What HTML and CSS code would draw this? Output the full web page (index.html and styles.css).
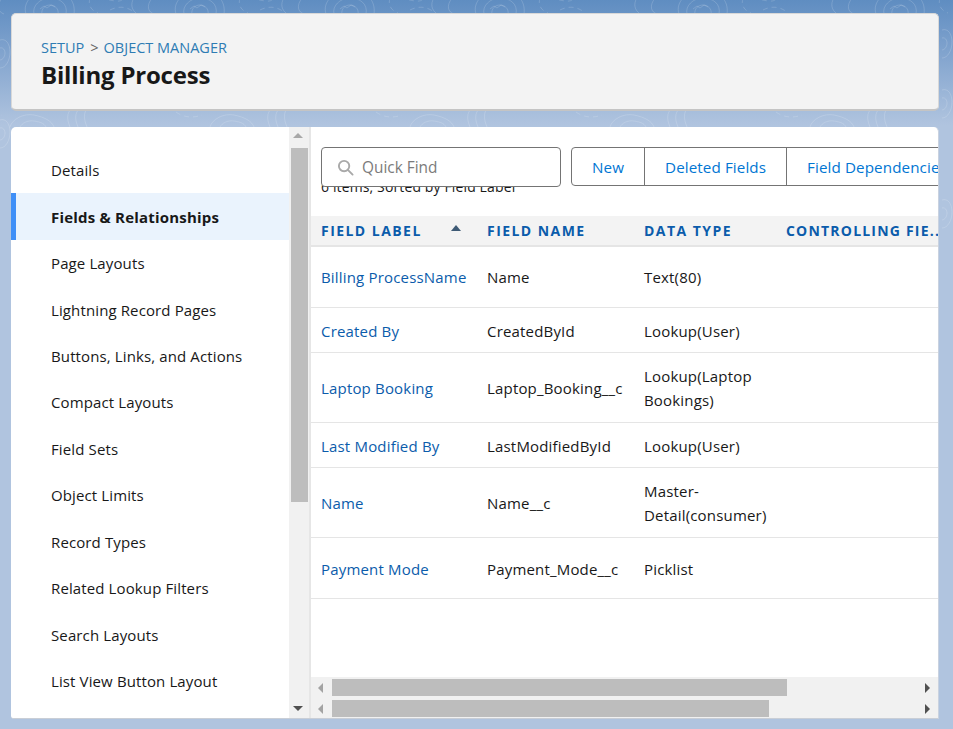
FILE: index.html
```html
<!DOCTYPE html>
<html lang="en">
<head>
  <meta charset="UTF-8">
  <meta name="viewport" content="width=device-width, initial-scale=1.0">
  <title>Billing Process | Object Manager</title>
  <link rel="stylesheet" href="styles.css">
</head>
<body>

<svg class="topo" width="953" height="729" viewBox="0 0 953 729" fill="none" stroke="#fff" stroke-opacity=".16">
  <defs>
    <g id="swirl">
      <path d="M-24 14c-4-12 8-24 24-24s26 10 24 24"/>
      <path d="M-16 14c-2-8 6-16 16-16s18 6 16 16"/>
      <path d="M-8 14c-1-5 3-9 8-9s9 4 8 9M-10 9l4-3 3 2 4-3 4 2"/>
      <path d="M40 -2c-2 6 0 12 8 15M50 -2c12 2 20 6 24 0M60 10c8-4 16-4 24 2" stroke-dasharray="5 4"/>
      <path d="M-48 -2c-6 8-4 14 2 16M-66 -2c-4 6-2 12 2 15"/>
    </g>
    <g id="arch">
      <path d="M-30 17c2-8 14-14 24-12s18 6 20 12"/>
      <path d="M-20 17c2-4 8-7 14-6s10 2 12 6"/>
      <path d="M30 0c-4 6-2 12 0 17M38 0c-4 6-2 12 0 17M46 0c-3 6-1 12 1 17"/>
      <path d="M-64 2c8 6 18 6 26 3" stroke-dasharray="5 4"/>
    </g>
    <path id="side" d="M0 0c6-2 10 4 10 12s-4 16-10 16M0 8c3-1 5 2 5 5s-2 7-5 7"/>
  </defs>
  <use href="#swirl" x="50" y="0"/>
  <use href="#swirl" x="200" y="0"/>
  <use href="#swirl" x="350" y="0"/>
  <use href="#swirl" x="500" y="0"/>
  <use href="#swirl" x="703" y="0"/>
  <use href="#swirl" x="900" y="0"/>
  <use href="#arch" x="40" y="110"/>
  <use href="#arch" x="240" y="110"/>
  <use href="#arch" x="440" y="110"/>
  <use href="#arch" x="640" y="110"/>
  <use href="#arch" x="840" y="110"/>
  <use href="#side" x="0" y="40"/>
  <use href="#side" x="0" y="120"/>
  <use href="#side" x="942" y="30"/>
  <use href="#side" x="942" y="90"/>
  <use href="#side" x="942" y="200"/>
</svg>

<header class="page-head">
  <div class="crumbs"><a>SETUP</a><span class="sep">&gt;</span><a>OBJECT MANAGER</a></div>
  <h1>Billing Process</h1>
</header>

<div class="panel">
  <nav class="side">
    <a>Details</a>
    <a class="active">Fields &amp; Relationships</a>
    <a>Page Layouts</a>
    <a>Lightning Record Pages</a>
    <a>Buttons, Links, and Actions</a>
    <a>Compact Layouts</a>
    <a>Field Sets</a>
    <a>Object Limits</a>
    <a>Record Types</a>
    <a>Related Lookup Filters</a>
    <a>Search Layouts</a>
    <a>List View Button Layout</a>
  </nav>

  <div class="vbar">
    <span class="arrow up"></span>
    <div class="vthumb"></div>
    <span class="arrow down"></span>
  </div>

  <main class="content">
    <div class="toolbar">
      <div class="search">
        <svg width="17" height="17" viewBox="0 0 18 18" fill="none" stroke="#a9a9a9" stroke-width="2">
          <circle cx="7.5" cy="7.5" r="5.5"/>
          <path d="M11.5 11.5l5 5" stroke-linecap="round"/>
        </svg>
        <span>Quick Find</span>
      </div>
      <div class="btns">
        <a>New</a>
        <a>Deleted Fields</a>
        <a>Field Dependencies</a>
      </div>
    </div>
    <p class="count">6 items, Sorted by Field Label</p>

    <table class="fields">
      <thead>
        <tr>
          <th class="sorted">FIELD LABEL<span class="sort-up"></span></th>
          <th>FIELD NAME</th>
          <th>DATA TYPE</th>
          <th class="narrow">CONTROLLING FIE..</th>
        </tr>
      </thead>
      <tbody>
        <tr class="first">
          <td><a>Billing ProcessName</a></td><td>Name</td><td>Text(80)</td><td></td>
        </tr>
        <tr>
          <td><a>Created By</a></td><td>CreatedById</td><td>Lookup(User)</td><td></td>
        </tr>
        <tr class="tall">
          <td><a>Laptop Booking</a></td><td>Laptop_Booking__c</td><td>Lookup(Laptop Bookings)</td><td></td>
        </tr>
        <tr>
          <td><a>Last Modified By</a></td><td>LastModifiedById</td><td>Lookup(User)</td><td></td>
        </tr>
        <tr class="tall">
          <td><a>Name</a></td><td>Name__c</td><td>Master-Detail(consumer)</td><td></td>
        </tr>
        <tr class="last">
          <td><a>Payment Mode</a></td><td>Payment_Mode__c</td><td>Picklist</td><td></td>
        </tr>
      </tbody>
    </table>

    <div class="hbars">
      <div class="hbar">
        <span class="arrow left"></span>
        <div class="track"><div class="hthumb wide"></div></div>
        <span class="arrow right"></span>
      </div>
      <div class="hbar">
        <span class="arrow left"></span>
        <div class="track"><div class="hthumb"></div></div>
        <span class="arrow right"></span>
      </div>
    </div>
  </main>
</div>

</body>
</html>
```

FILE: styles.css
```css
* {
  box-sizing: border-box;
}
html, body {
  height: 100%;
}
body {
  margin: 0;
  padding: 13px 14px 10px 11px;
  height: 729px;
  overflow: hidden;
  display: flex;
  flex-direction: column;
  gap: 16px;
  position: relative;
  font-family: "Open Sans", "Noto Sans", sans-serif;
  font-size: 15px;
  color: #181818;
  background: linear-gradient(#5f8dc1 0, #7fa2cd 50px, #b0c4df 125px);
}
.topo {
  position: absolute;
  top: 0;
  left: 0;
}
.page-head {
  position: relative;
  height: 98px;
  padding: 24px 29px 0;
  background: #f3f3f3;
  border: 1px solid #d8d8d8;
  border-bottom: 2px solid #c4c4c4;
  border-radius: 5px;
}
.crumbs {
  display: flex;
  align-items: center;
  height: 18px;
  font-size: 14.5px;
  letter-spacing: 0;
  color: #2e7cb3;
}
.sep {
  margin: 0 5px 0 6px;
  color: #666;
}
h1 {
  margin: 3px 0 0;
  font-size: 24px;
  line-height: 32px;
  font-weight: 700;
  letter-spacing: -0.2px;
  color: #181818;
}
.panel {
  position: relative;
  flex: none;
  height: 592px;
  display: flex;
  background: #fff;
  border-right: 1px solid #c9d2e0;
  border-bottom: 1px solid #c9ced6;
  border-radius: 5px 5px 0 3px;
  overflow: hidden;
}
.side {
  width: 278px;
  padding-top: 20px;
  flex: none;
}
.side a {
  display: flex;
  align-items: center;
  height: 46.45px;
  padding-left: 40px;
  font-size: 15px;
  letter-spacing: 0.12px;
}
.side .active {
  font-weight: 700;
  letter-spacing: 0.2px;
  background: #eaf3fd;
  border-left: 5px solid #3f8ff7;
  padding-left: 35px;
}
.vbar {
  position: relative;
  width: 22px;
  flex: none;
  background: #f1f1f1;
  border-right: 2px solid #e6e6e6;
  padding: 21px 2px 0 2px;
}
.vthumb {
  width: 17px;
  height: 354px;
  background: #bdbdbd;
}
.arrow {
  position: absolute;
  width: 0;
  height: 0;
  border: 5px solid transparent;
}
.arrow.up {
  top: 6px;
  left: 4px;
  border-top: 0;
  border-bottom-color: #a8a8a8;
}
.arrow.down {
  bottom: 7px;
  left: 4px;
  border-bottom: 0;
  border-top-color: #505050;
}
.arrow.left {
  top: 4px;
  left: 7px;
  border-left: 0;
  border-right-color: #a3a3a3;
}
.arrow.right {
  top: 4px;
  right: 8px;
  border-right: 0;
  border-left-color: #505050;
}
.content {
  position: relative;
  flex: 1;
  min-width: 0;
  overflow: hidden;
}
.toolbar {
  position: relative;
  z-index: 1;
  display: flex;
  gap: 10px;
  padding: 20px 0 0 10px;
  white-space: nowrap;
}
.search {
  display: flex;
  align-items: center;
  gap: 8px;
  width: 240px;
  height: 40px;
  flex: none;
  padding: 1px 0 0 15px;
  background: #fff;
  border: 1px solid #747474;
  border-radius: 4px;
  font-size: 15.4px;
  color: #7b7b7b;
}
.btns {
  display: flex;
  height: 39px;
  flex: none;
  border: 1px solid #747474;
  border-radius: 4px;
}
.btns a {
  display: flex;
  align-items: center;
  padding: 0 20px;
  font-size: 15.2px;
  letter-spacing: 0.1px;
  color: #0176d3;
  border-left: 1px solid #747474;
}
.btns a:first-child {
  border-left: 0;
}
.count {
  margin: -10px 0 0 10px;
  height: 39px;
  font-size: 14px;
  letter-spacing: 0.13px;
  line-height: 20px;
}
.fields {
  width: 100%;
  table-layout: fixed;
  border-collapse: collapse;
}
.fields th {
  height: 30px;
  padding: 0 0 0 10px;
  text-align: left;
  white-space: nowrap;
  overflow: hidden;
  font-size: 14px;
  font-weight: 700;
  letter-spacing: 1.45px;
  color: #0b5cab;
  background: #f3f3f3;
  border-bottom: 2px solid #e5e5e5;
}
.fields .narrow {
  letter-spacing: 1.2px;
}
.fields th:nth-child(1), .fields td:nth-child(1) {
  width: 166px;
}
.fields th:nth-child(2), .fields td:nth-child(2) {
  width: 157px;
}
.fields th:nth-child(3), .fields td:nth-child(3) {
  width: 142px;
}
.sorted {
  position: relative;
}
.sort-up {
  position: absolute;
  top: 9px;
  left: 140px;
  width: 0;
  height: 0;
  border: 5px solid transparent;
  border-top: 0;
  border-bottom: 6px solid #3e5a75;
}
.fields td {
  height: 45px;
  padding: 2px 10px 0;
  font-size: 15px;
  letter-spacing: 0.18px;
  line-height: 24px;
  border-bottom: 1px solid #e5e5e5;
}
.fields .first td {
  height: 61px;
  padding-top: 0;
}
.fields .tall td {
  height: 70px;
}
.fields .last td {
  height: 61px;
  padding-top: 2px;
}
.fields a {
  color: #0b5cab;
}
.hbars {
  position: absolute;
  left: 0;
  right: 0;
  bottom: 0;
  height: 41px;
  padding-top: 2px;
  display: flex;
  flex-direction: column;
  gap: 4px;
  background: #f1f1f1;
}
.hbar {
  position: relative;
  height: 17px;
  padding: 0 21px;
}
.track {
  height: 17px;
}
.hthumb {
  width: 437px;
  height: 17px;
  background: #bdbdbd;
}
.hthumb.wide {
  width: 455px;
}
```
